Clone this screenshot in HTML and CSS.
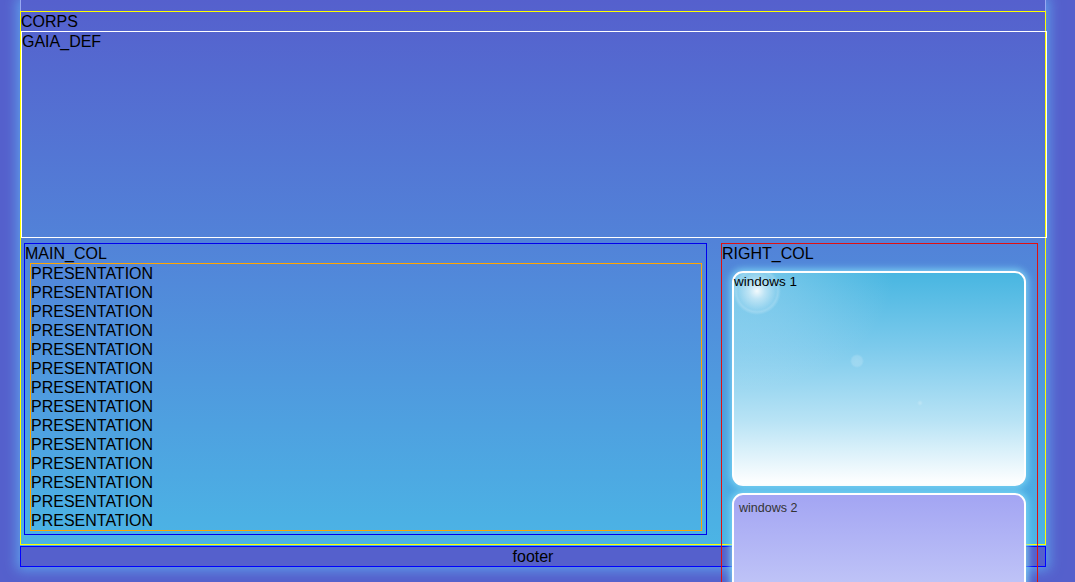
FILE: index.html
```html
<!DOCTYPE html>
<html>
<head>
<meta charset="utf-8">
<title>GAIA</title>
<link rel="stylesheet" href="styles.css">
</head>
<body>
<div class="page">
  <div class="header"></div>
  <div class="corps">
    <div class="label">CORPS</div>
    <div class="gaia">
      <div class="gaia-label">GAIA_DEF</div>
    </div>
    <div class="cols">
      <div class="main-col">
        <div class="label">MAIN_COL</div>
        <div class="presentation">
          <div class="pres-item">PRESENTATION</div>
          <div class="pres-item">PRESENTATION</div>
          <div class="pres-item">PRESENTATION</div>
          <div class="pres-item">PRESENTATION</div>
          <div class="pres-item">PRESENTATION</div>
          <div class="pres-item">PRESENTATION</div>
          <div class="pres-item">PRESENTATION</div>
          <div class="pres-item">PRESENTATION</div>
          <div class="pres-item">PRESENTATION</div>
          <div class="pres-item">PRESENTATION</div>
          <div class="pres-item">PRESENTATION</div>
          <div class="pres-item">PRESENTATION</div>
          <div class="pres-item">PRESENTATION</div>
          <div class="pres-item">PRESENTATION</div>
        </div>
      </div>
      <div class="right-col">
        <div class="label">RIGHT_COL</div>
        <div class="win win1">windows 1</div>
        <div class="win win2">windows 2</div>
      </div>
    </div>
  </div>
  <div class="footer">footer</div>
</div>
</body>
</html>
```

FILE: styles.css
```css
html, body {
  margin: 0;
  padding: 0;
  height: 100%;
}

body {
  background: #5560cc;
  font-family: "Liberation Sans", Arial, sans-serif;
  font-size: 16px;
  line-height: 19px;
  color: #000;
  overflow: hidden;
}

.page {
  width: 1026px;
  margin-left: 20px;
  background: linear-gradient(to bottom, #5560cd 0%, #5282d8 42%, #4bb8e6 100%);
  box-shadow: 0 0 12px 3px rgba(96, 170, 240, 0.85);
}

.header {
  height: 11px;
  box-sizing: border-box;
  border-left: 1px solid #98a8f2;
  border-right: 1px solid #98a8f2;
}

.corps {
  box-sizing: border-box;
  width: 1026px;
  height: 534px;
  border: 1px solid #ffff00;
}

.label {
  height: 19px;
  white-space: nowrap;
}

.gaia {
  width: 1024px;
  height: 205px;
  border: 1px solid #ffffff;
}

.gaia-label {
  padding-left: 0;
}

.cols {
  display: flex;
  align-items: flex-start;
  height: 306px;
}

.main-col {
  box-sizing: border-box;
  width: 683px;
  margin: 5px 0 0 3px;
  border: 1px solid #0000ee;
  padding-bottom: 3px;
}

.presentation {
  margin: 0 4px 0 5px;
  border: 1px solid #ffa500;
}

.pres-item {
  height: 19px;
  white-space: nowrap;
}

.right-col {
  position: relative;
  z-index: 1;
  box-sizing: border-box;
  width: 317px;
  margin: 5px 0 0 14px;
  border: 1px solid #e01010;
  padding-bottom: 40px;
}

.win {
  box-sizing: border-box;
  width: 294px;
  height: 215px;
  margin-left: 10px;
  border: 2px solid #ffffff;
  border-radius: 11px;
  box-shadow: 0 0 7px 2px rgba(125, 215, 245, 0.9);
  white-space: nowrap;
}

.win1 {
  margin-top: 8px;
  padding-top: 1px;
  font-size: 13.5px;
  line-height: 16px;
  background:
    radial-gradient(circle at 23px 18px, rgba(255, 255, 255, 0.9) 0px, rgba(255, 255, 255, 0.5) 8px, rgba(255, 255, 255, 0.12) 19px, rgba(255, 255, 255, 0.22) 21px, rgba(255, 255, 255, 0) 24px),
    radial-gradient(circle at 123px 88px, rgba(255, 255, 255, 0.2) 0px, rgba(255, 255, 255, 0.16) 5px, rgba(255, 255, 255, 0) 7px),
    radial-gradient(circle at 186px 130px, rgba(255, 255, 255, 0.25) 0px, rgba(255, 255, 255, 0) 3px),
    radial-gradient(ellipse 160px 120px at 0px 0px, rgba(230, 240, 255, 0.35) 0%, rgba(230, 240, 255, 0) 100%),
    linear-gradient(to bottom, #48b6e1 0%, #7ccaec 35%, #b8e3f5 70%, #ffffff 100%);
}

.win2 {
  margin-top: 7px;
  padding: 6px 0 0 5px;
  font-size: 12.5px;
  line-height: 14px;
  color: #333333;
  background: linear-gradient(to bottom, #a3a5f3 0%, #c4c9f8 50%, #dde3fc 100%);
}

.footer {
  box-sizing: border-box;
  width: 1026px;
  height: 21px;
  margin-top: 1px;
  border: 1px solid #0000ff;
  background: #5560cc;
  text-align: center;
}
```
